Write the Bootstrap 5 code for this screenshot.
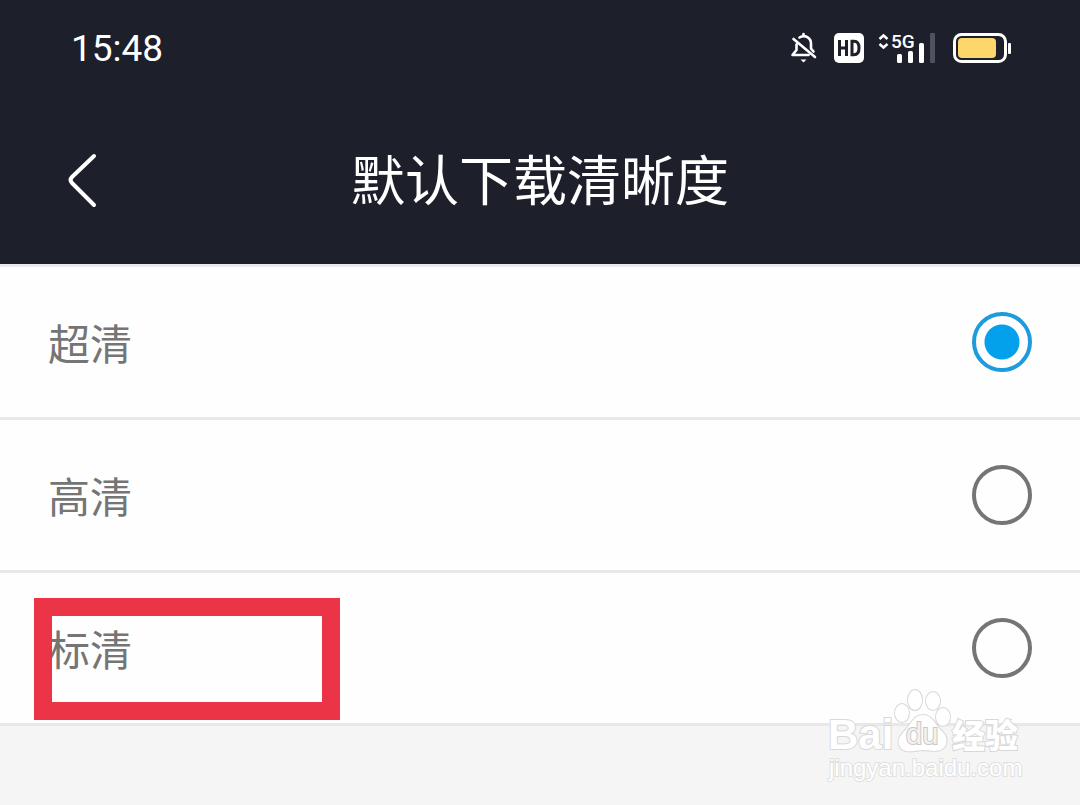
<!DOCTYPE html>
<html lang="zh-CN">
<head>
<meta charset="utf-8">
<meta name="viewport" content="width=device-width, initial-scale=1">
<title>默认下载清晰度</title>
<link rel="stylesheet" href="https://cdn.jsdelivr.net/npm/bootstrap@5.3.0/dist/css/bootstrap.min.css">
<style>
  body { background: #f5f5f5; font-family: Roboto, "Noto Sans CJK SC", sans-serif; }
  .top-area { background: #1d1f2b; border-bottom: 3px solid #e9eae9; }
  .status-bar { height: 96px; padding: 0 68px 0 71px; }
  .clock { font-size: 37px; line-height: 48px; padding-top: 2px; }
  .title-bar { height: 168px; padding: 0 64px; }
  .title-bar h1 { font-size: 54px; line-height: 64px; font-weight: 400; padding-top: 6px; }
  .back-btn { width: 40px; height: 60px; }
  .list-group-flush > .list-group-item.quality-row { height: 153px; padding: 0 48px; border-width: 0 0 3px; border-color: #e8e8e8; background: #fefefe; }
  .quality-row label { font-size: 42px; line-height: 60px; padding-top: 7px; color: #757575; }
  .quality-row .form-check-input { width: 60px; height: 60px; border: 4px solid #757575; background-color: transparent; }
  .quality-row .form-check-input:checked {
    border-color: #1e9bdc;
    background-image: radial-gradient(circle, #03a0ec 17px, transparent 18px);
    background-size: 100% 100%;
  }
  .quality-row .form-check-input:focus { box-shadow: none; }
  .highlight { left: 34px; top: 25px; width: 306px; height: 122px; border: 18px solid #eb3547; z-index: 3; pointer-events: none; }
  .watermark { right: 50px; top: -46px; z-index: 3; }
  .watermark text, .watermark path, .watermark ellipse { fill: #fff; stroke: #d8d8d8; stroke-width: 2px; paint-order: stroke; }
  .watermark .wm-latin { font: 700 42px "Liberation Sans", sans-serif; }
  .watermark .wm-du { font: 400 29px "Liberation Sans", sans-serif; fill: #f2f2f2; stroke: #c8c8c8; }
  .watermark .wm-han { font: 900 33px "Noto Sans CJK SC", sans-serif; }
  .watermark .wm-url { font: 400 24px "Liberation Sans", sans-serif; stroke: #e0e0e0; }
</style>
</head>
<body>
<div class="d-flex flex-column min-vh-100">
  <header class="top-area text-white">
    <div class="status-bar d-flex align-items-center justify-content-between">
      <time class="clock">15:48</time>
      <svg width="224" height="36" viewBox="0 0 224 36" role="img" aria-label="静音 HD 5G 电池">
        <!-- muted bell -->
        <g fill="none" stroke="#fff" stroke-width="2.6" stroke-linecap="round" stroke-linejoin="round">
          <path d="M5.500 9L27 27M15.500 4V6M11.500 7.500C17 4 23 8 23 13.500V18.500L25.500 21.500M8.500 14.500V20L4.500 25H20.500"/>
        </g>
        <path d="M12.500 29.500H18.500L15.500 32.500Z" fill="#fff"/>
        <rect x="46" y="3" width="30" height="30" rx="5" fill="#fff"/>
        <path d="M51.500 10V26M58.500 10V26M51.500 18H58.500M64 11.300V24.700H66Q71 24.700 71 18T66 11.300Z" fill="none" stroke="#1d1f2b" stroke-width="3"/>
        <path d="M91.500 9L95.500 5.500L99.500 9M91.500 14L95.500 17.500L99.500 14" fill="none" stroke="#fff" stroke-width="2.500"/>
        <text x="103" y="18" font-family="Roboto, sans-serif" font-size="19" font-weight="500" fill="#fff">5G</text>
        <g fill="#fff">
          <rect x="109" y="24" width="5" height="9" rx="1.500"/>
          <rect x="120" y="21" width="5" height="12" rx="1.500"/>
          <rect x="131" y="13" width="5" height="20" rx="1.500"/>
          <rect x="142" y="3" width="5" height="30" rx="1" fill="#505260"/>
          <rect x="220" y="13" width="3" height="11" rx="1"/>
        </g>
        <rect x="166.500" y="4.500" width="51" height="27" rx="7" fill="none" stroke="#fff" stroke-width="3"/>
        <rect x="170" y="8" width="38" height="20" rx="4" fill="#fdd66c"/>
      </svg>
    </div>
    <div class="title-bar d-flex align-items-center justify-content-between">
      <button type="button" class="back-btn btn p-0 border-0 d-flex align-items-center" aria-label="返回">
        <svg width="36" height="60" viewBox="0 0 36 60" fill="none" stroke="#fff" stroke-width="4" stroke-linecap="round"><path d="M30 6L8 27Q5 30 8 33L30 55"/></svg>
      </button>
      <h1 class="mb-0">默认下载清晰度</h1>
      <span class="back-btn" aria-hidden="true"></span>
    </div>
  </header>

  <main class="list-group list-group-flush rounded-0">
    <div class="quality-row list-group-item d-flex align-items-center justify-content-between">
      <label class="flex-grow-1" for="q-super">超清</label>
      <input class="form-check-input m-0" type="radio" name="quality" id="q-super" checked>
    </div>
    <div class="quality-row list-group-item d-flex align-items-center justify-content-between">
      <label class="flex-grow-1" for="q-high">高清</label>
      <input class="form-check-input m-0" type="radio" name="quality" id="q-high">
    </div>
    <div class="quality-row list-group-item position-relative d-flex align-items-center justify-content-between">
      <label class="flex-grow-1" for="q-standard">标清</label>
      <input class="form-check-input m-0" type="radio" name="quality" id="q-standard">
      <div class="highlight position-absolute"></div>
    </div>
  </main>

  <footer class="position-relative flex-grow-1">
    <svg class="watermark position-absolute" width="210" height="110" viewBox="0 0 210 110">
      <text class="wm-latin" x="8" y="69">Bai</text>
      <ellipse cx="82" cy="33" rx="7" ry="9"/>
      <ellipse cx="95" cy="20" rx="7" ry="10"/>
      <ellipse cx="113" cy="21" rx="7" ry="9"/>
      <ellipse cx="123" cy="37" rx="7" ry="9"/>
      <path d="M103 35C111 35 114 42 119 48C125 54 128 58 126 64C123 73 114 71 103 70C91 71 83 74 79 65C77 58 82 54 87 48C92 42 95 35 103 35Z"/>
      <text class="wm-du" x="86" y="64">du</text>
      <text class="wm-han" x="132" y="68">经验</text>
      <text class="wm-url" x="9" y="96">jingyan.baidu.com</text>
    </svg>
  </footer>
</div>
<script src="https://cdn.jsdelivr.net/npm/bootstrap@5.3.0/dist/js/bootstrap.bundle.min.js"></script>
</body>
</html>
